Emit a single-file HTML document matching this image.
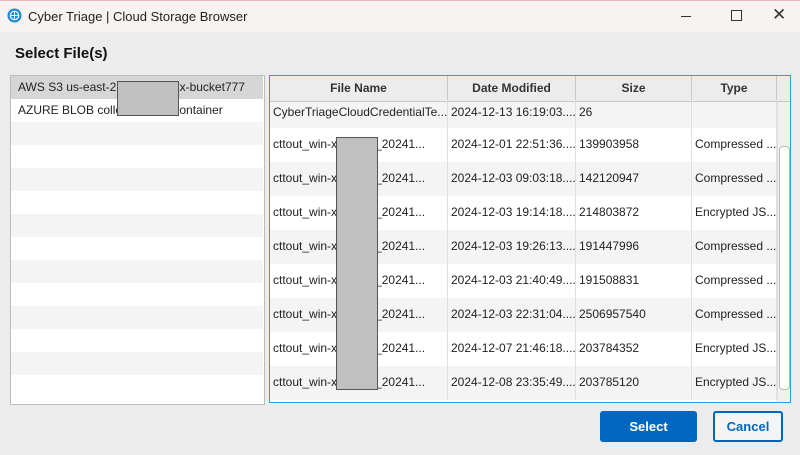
<!DOCTYPE html><html><head><style>
body{margin:0;width:800px;height:455px;background:#ececec;font-family:"Liberation Sans",sans-serif;position:relative;overflow:hidden;font-size:12px;color:#222}
.tb{position:absolute;left:0;top:0;width:800px;height:31px;background:#f7f3f0;border-top:1px solid #e8b8b8}
.abs{position:absolute}
.lrow{position:absolute;left:0;width:252px;height:23px;line-height:23px;padding-left:7px;box-sizing:border-box;white-space:nowrap}
.tr{position:absolute;left:0;width:506px}
.c{position:absolute;top:0;height:100%;border-right:1px solid #e0e0e0;padding-left:3px;box-sizing:border-box;white-space:nowrap;overflow:hidden;line-height:22px}
.h{position:absolute;top:0;height:24px;line-height:24px;text-align:center;font-weight:bold;border-right:1px solid #c8c8c8;box-sizing:border-box;color:#333}
</style></head><body>
<div class="tb">
<svg class="abs" style="left:7px;top:7px" width="15" height="15" viewBox="0 0 16 16"><circle cx="8" cy="8" r="7.5" fill="#1a8fd8"/><circle cx="8" cy="8" r="4.5" fill="none" stroke="#fff" stroke-width="1.2"/><path d="M8 3.5V12.5M3.5 8H12.5" stroke="#fff" stroke-width="1"/></svg>
<div class="abs" style="left:28px;top:8px;font-size:13px;color:#222">Cyber Triage | Cloud Storage Browser</div>
<div class="abs" style="left:681px;top:15px;width:10px;height:1px;background:#333"></div>
<div class="abs" style="left:731px;top:9px;width:9px;height:9px;border:1px solid #333"></div>
<div class="abs" style="left:772px;top:4px;font-size:17px;color:#333">✕</div>
</div>
<div class="abs" style="left:15px;top:45px;font-size:15px;font-weight:bold;color:#111">Select File(s)</div>
<div class="abs" style="left:10px;top:75px;width:253px;height:328px;border:1px solid #bbb;background:#fff;overflow:hidden">
<div class="lrow" style="top:0;background:#d6d6d6">AWS S3 us-east-2 xxxxxxxxxxx-bucket777</div>
<div class="lrow" style="top:23px;background:#fff">AZURE BLOB collection-xxx-container</div>
<div class="lrow" style="top:46px;background:#f4f4f4"></div>
<div class="lrow" style="top:69px;background:#fff"></div>
<div class="lrow" style="top:92px;background:#f4f4f4"></div>
<div class="lrow" style="top:115px;background:#fff"></div>
<div class="lrow" style="top:138px;background:#f4f4f4"></div>
<div class="lrow" style="top:161px;background:#fff"></div>
<div class="lrow" style="top:184px;background:#f4f4f4"></div>
<div class="lrow" style="top:207px;background:#fff"></div>
<div class="lrow" style="top:230px;background:#f4f4f4"></div>
<div class="lrow" style="top:253px;background:#fff"></div>
<div class="lrow" style="top:276px;background:#f4f4f4"></div>
<div class="lrow" style="top:299px;background:#fff"></div>
</div>
<div class="abs" style="left:117px;top:81px;width:60px;height:33px;background:#c0c0c0;border:1px solid #555"></div>
<div class="abs" style="left:269px;top:75px;width:520px;height:326px;border:1px solid #2aa0d8;background:#fff;overflow:hidden">
<div class="abs" style="left:0;top:0;width:520px;height:25px;background:#ececec;border-bottom:1px solid #c8c8c8"></div>
<div class="h" style="left:0;width:178px">File Name</div>
<div class="h" style="left:178px;width:128px">Date Modified</div>
<div class="h" style="left:306px;width:116px">Size</div>
<div class="h" style="left:422px;width:85px">Type</div>
<div id="rows"></div>
<div class="abs" style="left:507px;top:26px;width:13px;height:300px;background:#f0f0f0;border-left:1px solid #ddd"></div>
<div class="abs" style="left:509px;top:70px;width:9px;height:242px;background:#fff;border:1px solid #bbb;border-radius:4px"></div>
</div>
<div class="abs" style="left:336px;top:137px;width:40px;height:251px;background:#c0c0c0;border:1px solid #555"></div>
<div class="abs" style="left:600px;top:411px;width:97px;height:31px;background:#0067c0;border-radius:3px;color:#fff;font-weight:bold;text-align:center;line-height:31px;font-size:13px">Select</div>
<div class="abs" style="left:713px;top:411px;width:66px;height:27px;border:2px solid #0067c0;border-radius:3px;background:#f4f4f4;color:#0067c0;font-weight:bold;text-align:center;line-height:27px;font-size:13px">Cancel</div>
<script>
var d=[["CyberTriageCloudCredentialTe...","2024-12-13 16:19:03....","26",""],
["cttout_win-xxxx271_20241...","2024-12-01 22:51:36....","139903958","Compressed ..."],
["cttout_win-xxxx271_20241...","2024-12-03 09:03:18....","142120947","Compressed ..."],
["cttout_win-xxxx271_20241...","2024-12-03 19:14:18....","214803872","Encrypted JS..."],
["cttout_win-xxxx271_20241...","2024-12-03 19:26:13....","191447996","Compressed ..."],
["cttout_win-xxxx271_20241...","2024-12-03 21:40:49....","191508831","Compressed ..."],
["cttout_win-xxxx271_20241...","2024-12-03 22:31:04....","2506957540","Compressed ..."],
["cttout_win-xxxx271_20241...","2024-12-07 21:46:18....","203784352","Encrypted JS..."],
["cttout_win-xxxx271_20241...","2024-12-08 23:35:49....","203785120","Encrypted JS..."]];
var h="",L=[0,178,306,422],W=[178,128,116,85];
d.forEach(function(r,i){var t=i==0?26:52+(i-1)*34,ht=i==0?26:34;
h+='<div class="tr" style="top:'+t+'px;height:'+ht+'px;background:'+(i%2==0?'#f4f4f4':'#fff')+'">';
for(var j=0;j<4;j++)h+='<div class="c" style="left:'+L[j]+'px;width:'+W[j]+'px;line-height:'+(i==0?20:32)+'px">'+r[j]+'</div>';
h+='</div>';});
document.getElementById('rows').innerHTML=h;
</script>
</body></html>
